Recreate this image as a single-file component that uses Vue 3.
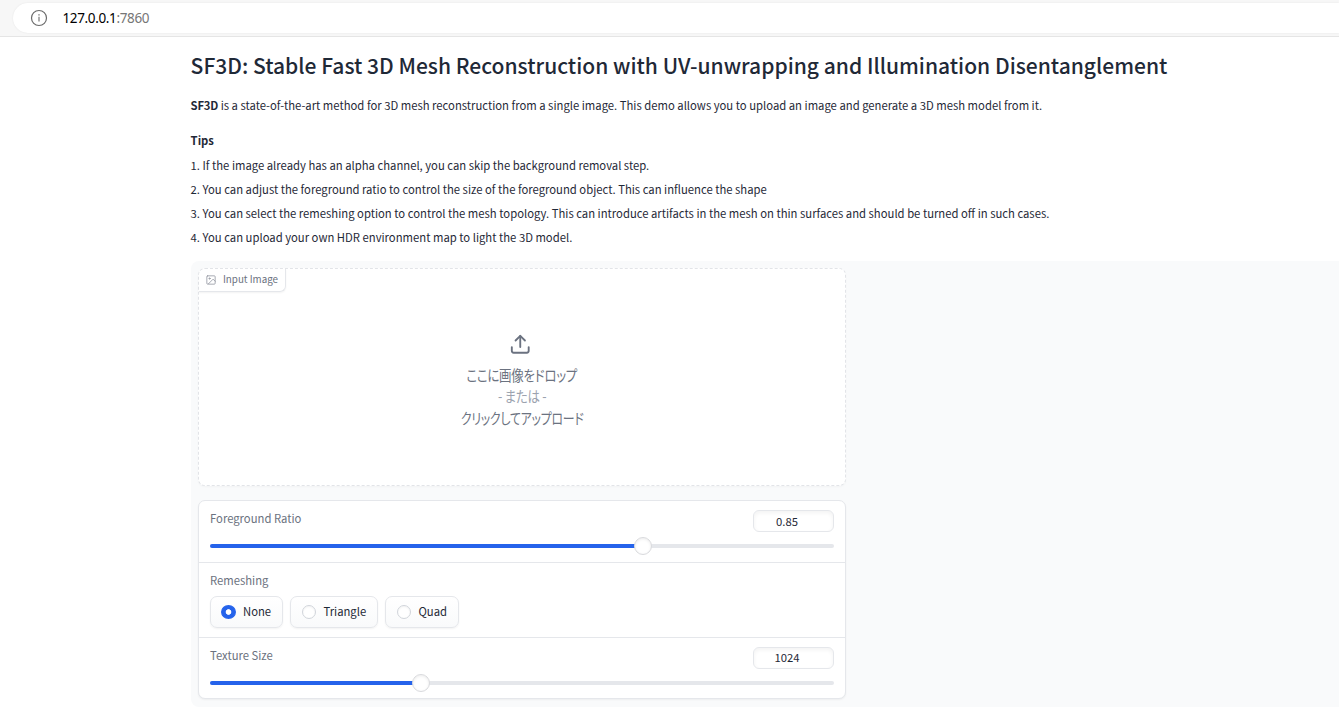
<script setup>
import { ref } from 'vue'

const tips = [
  '1. If the image already has an alpha channel, you can skip the background removal step.',
  '2. You can adjust the foreground ratio to control the size of the foreground object. This can influence the shape',
  '3. You can select the remeshing option to control the mesh topology. This can introduce artifacts in the mesh on thin surfaces and should be turned off in such cases.',
  '4. You can upload your own HDR environment map to light the 3D model.'
]
const options = ['None', 'Triangle', 'Quad']
const remesh = ref('None')
const ratioPct = 69.4
const texturePct = 33.8
</script>

<template>
  <div class="page">
    <header class="bar">
      <div class="address">
        <svg class="info" viewBox="0 0 18 18" width="18" height="18" fill="none" stroke="#6b6b6b">
          <circle cx="9" cy="9" r="7.5" stroke-width="1.2" />
          <path d="M9 7.8v4.7" stroke-width="1.1" />
          <path d="M9 5.2v1.3" stroke-width="1.3" />
        </svg>
        <span class="url">127.0.0.1<span class="port">:7860</span></span>
      </div>
    </header>

    <main class="content">
      <h1>SF3D: Stable Fast 3D Mesh Reconstruction with UV-unwrapping and Illumination Disentanglement</h1>
      <p class="intro"><strong>SF3D</strong> is a state-of-the-art method for 3D mesh reconstruction from a single image. This demo allows you to upload an image and generate a 3D mesh model from it.</p>
      <p class="tips-title">Tips</p>
      <p v-for="t in tips" :key="t" class="tip">{{ t }}</p>

      <section class="group">
        <div class="column">
          <div class="upload">
            <div class="label">
              <svg viewBox="0 0 24 24" width="10" height="10" fill="none" stroke="#8b909b" stroke-width="1.8" stroke-linecap="round" stroke-linejoin="round">
                <rect x="2" y="2" width="20" height="20" rx="2" />
                <circle cx="8.5" cy="8.5" r="1.5" />
                <path d="M22 15l-5-5L6 21" />
              </svg>
              <span>Input Image</span>
            </div>
            <svg class="up" viewBox="0 0 24 24" width="22.5" height="22.5" fill="none" stroke="#6b7280" stroke-width="2" stroke-linecap="round" stroke-linejoin="round">
              <path d="M21 15v4a2 2 0 0 1-2 2H5a2 2 0 0 1-2-2v-4" />
              <path d="M17 8l-5-5-5 5" />
              <path d="M12 3v12" />
            </svg>
            <div class="jp j1">ここに画像をドロップ</div>
            <div class="jp j2">- または -</div>
            <div class="jp j3">クリックしてアップロード</div>
          </div>

          <div class="form">
            <div class="row ratio">
              <div class="head">
                <span class="name">Foreground Ratio</span>
                <span class="num">0.85</span>
              </div>
              <div class="slider">
                <div class="fill" :style="{ width: ratioPct + '%' }"></div>
                <div class="thumb" :style="{ left: ratioPct + '%' }"></div>
              </div>
            </div>
            <div class="row remesh">
              <span class="name">Remeshing</span>
              <div class="radios">
                <label v-for="o in options" :key="o" class="radio" :class="['r-' + o, { on: remesh === o }]" @click="remesh = o">
                  <i class="dot"></i><span>{{ o }}</span>
                </label>
              </div>
            </div>
            <div class="row texture">
              <div class="head">
                <span class="name">Texture Size</span>
                <span class="num">1024</span>
              </div>
              <div class="slider">
                <div class="fill" :style="{ width: texturePct + '%' }"></div>
                <div class="thumb" :style="{ left: texturePct + '%' }"></div>
              </div>
            </div>
          </div>
        </div>
      </section>
    </main>
  </div>
</template>

<style>
body { background: #fff; overflow: hidden; }
</style>

<style scoped>
.page {
  height: 710px;
  overflow: hidden;
  background: #fff;
  color: #1f2937;
  font-family: "Noto Sans CJK JP", "Noto Sans", sans-serif;
  font-size: 11.295px;
}
.page * { box-sizing: border-box; }
.bar {
  height: 37px;
  padding: 3px 0 0 13px;
  background: #f7f7f7;
  border-bottom: 1px solid #e5e5e5;
}
.address {
  height: 30px;
  display: flex;
  align-items: center;
  padding-left: 17px;
  background: #fff;
  border-radius: 15px 0 0 15px;
  box-shadow: 0 0 2px rgba(0, 0, 0, 0.08);
}
.url {
  margin-left: 14.4px;
  font-family: "Noto Sans", sans-serif;
  font-size: 13.5px;
  letter-spacing: -0.35px;
  color: #000;
}
.port { color: #767676; }
.content { padding-left: 190.6px; }
h1, p { margin: 0; white-space: nowrap; }
h1 {
  margin-top: 12px;
  height: 32px;
  line-height: 32px;
  font-size: 21.04px;
  font-weight: 500;
}
.intro { margin-top: 12px; height: 24px; line-height: 24px; }
.intro strong, .tips-title { font-weight: 600; }
.intro strong { letter-spacing: -0.2px; }
.tips-title { margin-top: 11px; height: 24px; line-height: 24px; }
.tip { height: 24px; line-height: 24px; }
.tips-title + .tip { margin-top: 1px; }
.group {
  margin-top: 12px;
  margin-left: 0.4px;
  height: 446px;
  padding: 7px 0 0 7px;
  background: #f9fafb;
  border-radius: 8px 0 0 8px;
}
.column { width: 648px; display: flex; flex-direction: column; gap: 14px; }
.upload {
  position: relative;
  height: 218px;
  padding-top: 64.4px;
  display: flex;
  flex-direction: column;
  align-items: center;
  background: #fff;
  border: 1px dashed #e2e4e8;
  border-radius: 7px;
  box-shadow: 0 1px 2px rgba(0, 0, 0, 0.03);
}
.label {
  position: absolute;
  left: 0;
  top: 0;
  width: 87px;
  height: 23px;
  display: flex;
  align-items: center;
  gap: 7px;
  padding-left: 7px;
  border: solid #e5e7eb;
  border-width: 0 1px 1px 0;
  border-radius: 6px 0 6px 0;
  box-shadow: 0 1px 2px rgba(0, 0, 0, 0.05);
  color: #6b7280;
  font-size: 9.8px;
  line-height: 14px;
  white-space: nowrap;
}
.label span { margin-bottom: 2px; }
.up { margin-left: -3.4px; flex: none; }
.jp {
  height: 21.5px;
  line-height: 21.5px;
  font-size: 15px;
  font-feature-settings: "palt";
  letter-spacing: -0.3px;
  color: #6b7280;
  white-space: nowrap;
}
.j1 { margin-top: 7.8px; transform: scaleX(0.83); }
.j2 { color: #9ca3af; transform: scaleX(0.83); }
.j3 { transform: scaleX(0.795); }
.form {
  height: 199px;
  background: #fff;
  border: 1px solid #e5e7eb;
  border-radius: 7px;
  box-shadow: 0 1px 2px rgba(0, 0, 0, 0.05);
}
.row { padding: 9px 11px 0; }
.ratio { height: 62px; border-bottom: 1px solid #e5e7eb; }
.remesh { height: 75px; border-bottom: 1px solid #e5e7eb; }
.head { display: flex; justify-content: space-between; align-items: flex-start; height: 22px; }
.name { display: block; height: 18px; line-height: 17px; color: #6b7280; white-space: nowrap; }
.num {
  width: 81px;
  height: 22px;
  line-height: 18px;
  padding-right: 13px;
  text-align: center;
  border: 1px solid #e5e7eb;
  border-radius: 6px;
  box-shadow: inset 0 2px 4px rgba(0, 0, 0, 0.05);
}
.ratio .num { line-height: 20px; }
.slider { position: relative; margin-top: 12px; height: 4px; border-radius: 2px; background: #e5e7eb; }
.fill { height: 4px; border-radius: 2px 0 0 2px; background: #2563eb; }
.thumb {
  position: absolute;
  top: -7px;
  width: 18px;
  height: 18px;
  margin-left: -9px;
  border-radius: 50%;
  border: 1px solid #d9dadd;
  background: #fff;
  box-shadow: inset 0 1px 3px rgba(0, 0, 0, 0.08);
}
.radios { display: flex; gap: 7px; margin-top: 6px; }
.radio {
  display: flex;
  align-items: center;
  height: 32px;
  padding-left: 11px;
  border: 1px solid #e5e7eb;
  border-radius: 7px;
  background: linear-gradient(to bottom, #fff, #f9fafb);
  box-shadow: 0 1px 2px rgba(0, 0, 0, 0.05);
  line-height: 16px;
}
.radio span { margin-bottom: 2px; }
.r-None { width: 73px; padding-left: 10px; }
.r-Triangle { width: 88px; }
.r-Quad { width: 74px; }
.dot {
  width: 14px;
  height: 14px;
  margin-right: 7.5px;
  border-radius: 50%;
  border: 1px solid #d1d5db;
  background: #fff;
  box-shadow: inset 0 1px 2px rgba(0, 0, 0, 0.05);
}
.on .dot {
  width: 15px;
  margin-right: 7px;
  background: radial-gradient(circle at center, #fff 2.4px, #2563eb 3.2px);
  border-color: #2563eb;
  box-shadow: none;
}
</style>
